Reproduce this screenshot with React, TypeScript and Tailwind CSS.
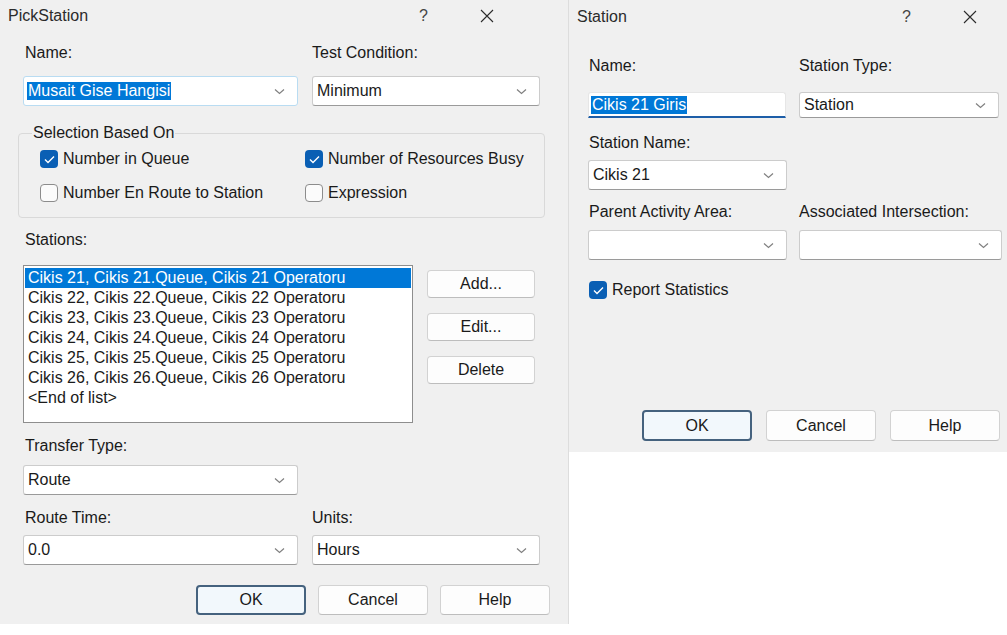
import type { ReactNode } from "react";
import clsx from "clsx";

function Chevron() {
  return (
    <svg width="11" height="7" viewBox="0 0 11 7" className="shrink-0">
      <path d="M1 1.5 L5.5 5.5 L10 1.5" fill="none" stroke="#808080" strokeWidth="1.2" />
    </svg>
  );
}

function CloseGlyph() {
  return (
    <svg width="14" height="14" viewBox="0 0 14 14">
      <path d="M1 1 L13 13 M13 1 L1 13" stroke="#2b2b2b" strokeWidth="1.1" />
    </svg>
  );
}

function TitleBar({ title, className }: { title: string; className: string }) {
  return (
    <div className={clsx("flex items-center pl-[8px]", className)}>
      <span className="text-[16px] text-[#2b2b2b]">{title}</span>
      <div className="ml-auto flex items-center">
        <span className="flex w-[63px] justify-center text-[16px] text-[#444444]">?</span>
        <span className="flex w-[63px] justify-center">
          <CloseGlyph />
        </span>
      </div>
    </div>
  );
}

function Combo({
  value,
  className,
  selected,
  focus,
}: {
  value?: string;
  className: string;
  selected?: boolean;
  focus?: boolean;
}) {
  return (
    <div
      className={clsx(
        "flex items-center justify-between rounded-[3px] border bg-white pl-[3px] pr-[12px]",
        focus ? "border-[#b9dcf2]" : "border-[#cccccc] border-b-[#9a9a9a]",
        className
      )}
    >
      <span className={clsx("px-[1px] leading-[18px]", selected && "bg-[#0078d7] text-white")}>{value}</span>
      <Chevron />
    </div>
  );
}

function CheckBox({ checked, label }: { checked?: boolean; label: string }) {
  return (
    <div className="flex h-[20px] items-center gap-[5px]">
      {checked ? (
        <span className="flex h-[18px] w-[18px] items-center justify-center rounded-[4px] bg-[#0a5fb4]">
          <svg width="11" height="9" viewBox="0 0 11 9">
            <path d="M1 4.6 L4 7.5 L10 1.5" fill="none" stroke="white" strokeWidth="1.4" />
          </svg>
        </span>
      ) : (
        <span className="h-[18px] w-[18px] rounded-[4px] border border-[#8c8c8c] bg-[#fbfbfb]" />
      )}
      <span>{label}</span>
    </div>
  );
}

function Button({ children, primary, className }: { children: ReactNode; primary?: boolean; className: string }) {
  return (
    <div
      className={clsx(
        "flex items-center justify-center rounded-[4px]",
        primary ? "border-2 border-[#45627e] bg-[#f2f8fc]" : "border border-[#d2d2d2] border-b-[#bdbdbd] bg-[#fdfdfd]",
        className
      )}
    >
      {children}
    </div>
  );
}

const stations = [21, 22, 23, 24, 25, 26].map(
  (n) => `Cikis ${n}, Cikis ${n}.Queue, Cikis ${n} Operatoru`
);

function PickStation() {
  return (
    <div className="flex h-[624px] w-[569px] shrink-0 flex-col border-r border-[#dddddd] bg-[#f0f0f0]">
      <TitleBar title="PickStation" className="h-[32px] pr-[50px]" />
      <div className="flex flex-col pl-[23px]">
        <div className="mt-[11px] flex h-[20px] items-center">
          <span className="w-[289px] pl-[2px]">Name:</span>
          <span>Test Condition:</span>
        </div>
        <div className="mt-[13px] flex gap-[14px]">
          <Combo value="Musait Gise Hangisi" selected focus className="h-[30px] w-[275px]" />
          <Combo value="Minimum" className="h-[30px] w-[228px]" />
        </div>

        <fieldset className="-ml-[5px] mt-[17px] w-[527px] rounded-[4px] border border-[#d9d9d9] pb-[14px] pl-[21px] pt-[6px]">
          <legend className="-ml-[8px] px-[1px] leading-[20px]">Selection Based On</legend>
          <div className="grid grid-cols-[265px_1fr] gap-y-[14px]">
            <CheckBox checked label="Number in Queue" />
            <CheckBox checked label="Number of Resources Busy" />
            <CheckBox label="Number En Route to Station" />
            <CheckBox label="Expression" />
          </div>
        </fieldset>

        <div className="mt-[12px] h-[20px] pl-[2px] leading-[20px]">Stations:</div>
        <div className="mt-[15px] flex gap-[14px]">
          <div className="flex h-[158px] w-[390px] flex-col border border-[#8e8e8e] bg-white px-[1px] pt-[2px]">
            {stations.map((s, i) => (
              <div
                key={s}
                className={clsx("h-[20px] pl-[3px] leading-[20px]", i === 0 && "bg-[#0078d7] text-white")}
              >
                {s}
              </div>
            ))}
            <div className="h-[20px] pl-[3px] leading-[20px]">&lt;End of list&gt;</div>
          </div>
          <div className="flex flex-col gap-[15px] pt-[5px]">
            <Button className="h-[28px] w-[108px]">Add...</Button>
            <Button className="h-[28px] w-[108px]">Edit...</Button>
            <Button className="h-[28px] w-[108px]">Delete</Button>
          </div>
        </div>

        <div className="mt-[13px] h-[20px] pl-[2px] leading-[20px]">Transfer Type:</div>
        <Combo value="Route" className="mt-[9px] h-[30px] w-[275px]" />

        <div className="mt-[13px] flex h-[20px] items-center">
          <span className="w-[289px] pl-[2px]">Route Time:</span>
          <span>Units:</span>
        </div>
        <div className="mt-[7px] flex gap-[14px]">
          <Combo value="0.0" className="h-[30px] w-[275px] border-[#a8a8a8]" />
          <Combo value="Hours" className="h-[30px] w-[228px]" />
        </div>

        <div className="mt-[20px] flex justify-end gap-[12px] pr-[18px]">
          <Button primary className="h-[30px] w-[110px]">OK</Button>
          <Button className="h-[30px] w-[110px]">Cancel</Button>
          <Button className="h-[30px] w-[110px]">Help</Button>
        </div>
      </div>
    </div>
  );
}

function StationDialog() {
  return (
    <div className="flex h-[452px] w-[438px] shrink-0 flex-col bg-[#f0f0f0]">
      <TitleBar title="Station" className="h-[34px] pr-[6px]" />
      <div className="flex flex-col pl-[19px]">
        <div className="mt-[22px] flex h-[20px] items-center">
          <span className="w-[211px] pl-[1px]">Name:</span>
          <span>Station Type:</span>
        </div>
        <div className="mt-[16px] flex gap-[13px]">
          <div className="flex h-[26px] w-[198px] items-center rounded-t-[3px] border border-b-2 border-[#e6e6e6] border-b-[#1d5ea8] bg-white pl-[2px]">
            <span className="bg-[#0078d7] px-[1px] leading-[18px] text-white">Cikis 21 Giris</span>
          </div>
          <Combo value="Station" className="h-[26px] w-[200px]" />
        </div>

        <div className="mt-[15px] h-[20px] pl-[1px] leading-[20px]">Station Name:</div>
        <Combo value="Cikis 21" className="mt-[7px] h-[30px] w-[199px]" />

        <div className="mt-[12px] flex h-[20px] items-center">
          <span className="w-[211px] pl-[1px]">Parent Activity Area:</span>
          <span>Associated Intersection:</span>
        </div>
        <div className="mt-[8px] flex gap-[12px]">
          <Combo className="h-[30px] w-[199px]" />
          <Combo className="h-[30px] w-[203px]" />
        </div>

        <div className="mt-[20px] pl-[1px]">
          <CheckBox checked label="Report Statistics" />
        </div>

        <div className="mt-[110px] flex justify-end gap-[14px] pr-[7px]">
          <Button primary className="h-[31px] w-[110px]">OK</Button>
          <Button className="h-[31px] w-[110px]">Cancel</Button>
          <Button className="h-[31px] w-[110px]">Help</Button>
        </div>
      </div>
    </div>
  );
}

export default function App() {
  return (
    <div className="flex h-[635px] w-[1007px] items-start overflow-hidden bg-white font-['Liberation_Sans',Arial,sans-serif] text-[16px] text-[#1a1a1a]">
      <PickStation />
      <StationDialog />
    </div>
  );
}
